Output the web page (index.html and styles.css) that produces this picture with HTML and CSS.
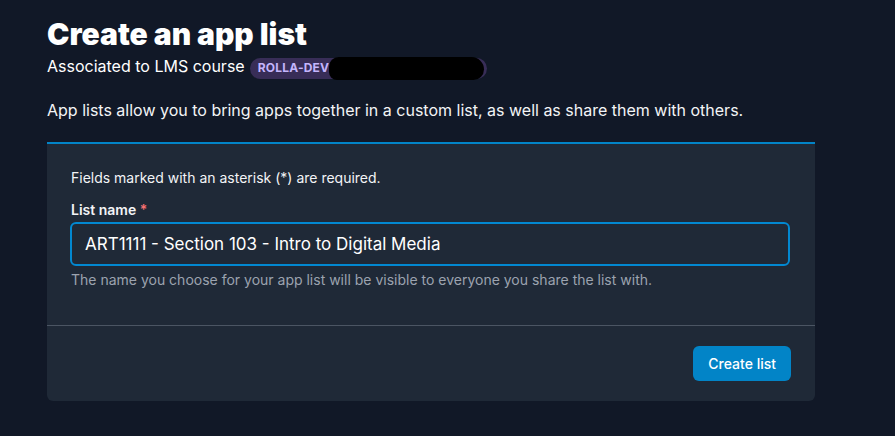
FILE: index.html
```html
<!DOCTYPE html>
<html lang="en">
<head>
    <meta charset="UTF-8">
    <meta name="viewport" content="width=device-width, initial-scale=1.0">
    <title>Create an app list</title>
    <link rel="stylesheet" href="styles.css">
</head>
<body>

<div class="page">
    <div class="page-header">
        <h1>Create an app list</h1>
        <div class="course">
            <span>Associated to LMS course</span>
            <span class="badge">ROLLA-DEV<span class="redacted"></span></span>
        </div>
    </div>

    <p class="intro">App lists allow you to bring apps together in a custom list, as well as share them with others.</p>

    <form class="card" id="list-form">
        <div class="card-body">
            <p class="note">Fields marked with an asterisk (*) are required.</p>
            <label for="list-name">List name <span class="req">*</span></label>
            <input type="text" id="list-name" value="ART1111 - Section 103 - Intro to Digital Media" />
            <p class="help">The name you choose for your app list will be visible to everyone you share the list with.</p>
        </div>
        <div class="card-footer">
            <button type="button" id="create-btn">Create list</button>
        </div>
    </form>
</div>

</body>
</html>
```

FILE: styles.css
```css
body {
    margin: 0;
    background-color: #111827;
    font-family: Inter, "Noto Sans", sans-serif;
    color: #f3f4f6;
}

.page {
    width: 768px;
    padding: 16px 0 0 47px;
}

.page-header h1 {
    margin: 0;
    font-size: 30px;
    line-height: 36px;
    font-weight: 900;
    color: #fff;
}

.course {
    display: flex;
    align-items: baseline;
    gap: 5px;
    margin-top: 4px;
    font-size: 16px;
    line-height: 20px;
    color: #fff;
}

.badge {
    display: inline-flex;
    align-items: center;
    height: 21px;
    padding: 0 8px;
    border-radius: 11px;
    background-color: #382d57;
    color: #c4b5fd;
    font-size: 12px;
    font-weight: 700;
    letter-spacing: 0.2px;
}

.redacted {
    display: inline-block;
    width: 155px;
    height: 23px;
    margin-right: -5px;
    border-radius: 11px 14px 12px 9px;
    background-color: #000;
}

.intro {
    margin: 19px 0 20px;
    font-size: 16px;
    line-height: 24px;
    color: #f3f4f6;
}

.card {
    border-top: 2px solid #0284c7;
    border-radius: 0 0 6px 6px;
    background-color: #1f2937;
}

.card-body {
    padding: 24px 24px 35px 24px;
    border-bottom: 1px solid #4b5563;
}

.note {
    margin: 0 0 12px;
    font-size: 14px;
    line-height: 20px;
}

label {
    display: block;
    margin-bottom: 2px;
    font-size: 14px;
    line-height: 20px;
    font-weight: 600;
}

.req {
    color: #f87171;
}

input[type="text"] {
    width: 100%;
    height: 44px;
    margin-left: -1px;
    padding: 0 13px;
    border: 2px solid #0288d1;
    border-radius: 6px;
    background-color: #1f2937;
    color: #fff;
    font-family: inherit;
    font-size: 17px;
    box-sizing: border-box;
}

input:focus {
    outline: none;
}

.help {
    margin: 4px 0 0;
    font-size: 14px;
    line-height: 20px;
    color: #9ca3af;
}

.card-footer {
    display: flex;
    justify-content: flex-end;
    padding: 20px 24px;
}

button {
    height: 35px;
    padding: 0 15px;
    border: none;
    border-radius: 6px;
    background-color: #0284c7;
    color: #fff;
    font-family: inherit;
    font-size: 14px;
    font-weight: 500;
    cursor: pointer;
}
```
